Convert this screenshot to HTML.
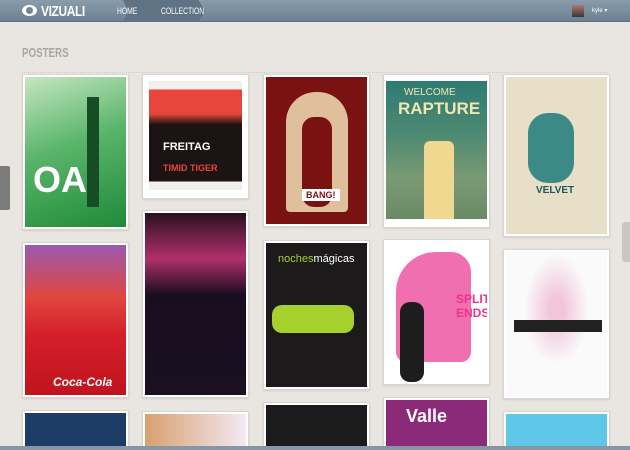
<!DOCTYPE html><html><head><style>
*{margin:0;padding:0;box-sizing:border-box}
html,body{width:630px;height:450px;overflow:hidden}
body{background:#e9e6e1;font-family:"Liberation Sans",sans-serif;position:relative}
.hd{position:absolute;left:0;top:0;width:630px;height:22px;background:linear-gradient(#8a9cab,#6c8192);border-bottom:1px solid #5d6f7d}
.logo{position:absolute;left:41px;top:3px;color:#fff;font-weight:bold;font-size:15px;letter-spacing:-0.5px;transform:scaleX(.8);transform-origin:left}
.eye{position:absolute;left:22px;top:5px;width:15px;height:11px;border-radius:50%;background:#fff}
.eye:after{content:"";position:absolute;left:4px;top:2px;width:7px;height:7px;border-radius:50%;background:#6f8596}
.nav{position:absolute;top:6px;color:#fff;font-size:9px;transform:scaleX(.75);transform-origin:left}
.col{position:absolute;left:123px;top:0;width:82px;height:22px;background:#5f7384;clip-path:polygon(0 0,92% 0,100% 50%,92% 100%,0 100%,6% 50%)}
.av{position:absolute;left:572px;top:5px;width:12px;height:12px;background:linear-gradient(#a77,#433)}
.usr{position:absolute;left:592px;top:7px;color:#fff;font-size:6px}
h1{position:absolute;left:22px;top:45px;font-size:13px;color:#a9a6a1;font-weight:bold;transform:scaleX(.75);transform-origin:left}
.rule{position:absolute;left:22px;top:72px;width:585px;border-top:1px dotted #cfcbc5}
.c{position:absolute;width:107px;background:#fff;border:1px solid #d8d4ce;box-shadow:0 1px 2px rgba(0,0,0,.1);padding:2px;overflow:hidden}
.c>div{width:100%;height:100%;position:relative;overflow:hidden}
.t{position:absolute;font-weight:bold;white-space:nowrap}
.fb{position:absolute;left:0;top:166px;width:10px;height:44px;background:#7b7b7b;border-radius:0 2px 2px 0}
.sc{position:absolute;left:622px;top:222px;width:8px;height:40px;background:#c9c6c1;border-radius:4px 0 0 4px}
.bot{position:absolute;left:0;top:446px;width:630px;height:4px;background:#8796a2}
</style></head><body>
<div class="hd">
<div class="eye"></div><div class="logo">VIZUALI</div>
<div class="col"></div>
<div class="nav" style="left:117px">HOME</div>
<div class="nav" style="left:161px">COLLECTION</div>
<div class="av"></div><div class="usr">kyle ▾</div>
</div>
<h1>POSTERS</h1><div class="rule"></div>
<div class="fb"></div><div class="sc"></div>

<div class="c" style="left:22px;top:74px;height:156px"><div style="background:linear-gradient(160deg,#c5e6c2,#5ab56a 45%,#1f8a3a)"><span class="t" style="left:8px;top:82px;font-size:36px;color:#fff">OA</span><span style="position:absolute;left:62px;top:20px;width:12px;height:110px;background:#174d22"></span></div></div>
<div class="c" style="left:22px;top:242px;height:156px"><div style="background:linear-gradient(#9a5ab0,#e0463d 35%,#d41f2a 60%,#c0141e)"><span class="t" style="left:28px;top:130px;font-size:12px;color:#fff;font-style:italic">Coca-Cola</span></div></div>
<div class="c" style="left:22px;top:410px;height:60px"><div style="background:#1d3d66"></div></div>

<div class="c" style="left:142px;top:74px;height:125px;padding:6px 6px 8px"><div style="background:linear-gradient(#f0f0ec 0 8%,#e8463a 8% 30%,#1c1414 40%,#1c1414 92%,#f0f0ec 92%)"><span class="t" style="left:14px;top:60px;font-size:11px;color:#fff">FREITAG</span><span class="t" style="left:14px;top:82px;font-size:9px;color:#e8463a">TIMID TIGER</span></div></div>
<div class="c" style="left:142px;top:210px;height:188px"><div style="background:linear-gradient(#2a1020,#b0306a 25%,#1a0d1f 45%,#1a1020)"></div></div>
<div class="c" style="left:142px;top:411px;height:60px"><div style="background:linear-gradient(90deg,#d8a070,#f3e9f4)"></div></div>

<div class="c" style="left:263px;top:74px;height:153px"><div style="background:#7a1212"><span style="position:absolute;left:20px;top:15px;width:62px;height:120px;background:#e0c09c;border-radius:30px 30px 4px 4px"></span><span style="position:absolute;left:36px;top:40px;width:30px;height:90px;background:#7a1212;border-radius:12px"></span><span class="t" style="left:36px;top:112px;font-size:9px;color:#7a1212;background:#fff;padding:1px 4px">BANG!</span></div></div>
<div class="c" style="left:263px;top:240px;height:150px"><div style="background:#1d1a1c"><span class="t" style="left:12px;top:10px;font-size:11px;color:#a6d02b;font-weight:normal">noches<span style="color:#fff">mágicas</span></span><span style="position:absolute;left:6px;top:62px;width:82px;height:28px;background:#a6d02b;border-radius:10px"></span></div></div>
<div class="c" style="left:263px;top:402px;height:60px"><div style="background:#1b1b1b"></div></div>

<div class="c" style="left:383px;top:74px;height:154px;padding:6px 2px 8px"><div style="background:linear-gradient(#2e7b73,#4e8a72 40%,#7b9a74 70%,#6a8a66)"><span class="t" style="left:18px;top:6px;font-size:10px;color:#f3e6b0;font-weight:normal">WELCOME</span><span class="t" style="left:12px;top:18px;font-size:17px;color:#f3e6b0">RAPTURE</span><span style="position:absolute;left:38px;top:60px;width:30px;height:80px;background:#f0d890;border-radius:6px 6px 0 0"></span></div></div>
<div class="c" style="left:383px;top:239px;height:146px"><div style="background:#fff"><span style="position:absolute;left:10px;top:10px;width:75px;height:110px;background:#f06fb0;border-radius:40px 20px 10px 10px"></span><span style="position:absolute;left:14px;top:60px;width:24px;height:80px;background:#1d1d1d;border-radius:10px"></span><span class="t" style="left:70px;top:50px;font-size:12px;color:#f0328a">SPLIT<br>ENDS</span></div></div>
<div class="c" style="left:383px;top:397px;height:60px"><div style="background:#8a2a78"><span class="t" style="left:20px;top:6px;font-size:18px;color:#fff">Valle</span></div></div>

<div class="c" style="left:503px;top:74px;height:163px"><div style="background:#e8dfc8"><span style="position:absolute;left:22px;top:36px;width:46px;height:70px;background:#3c8a86;border-radius:20px"></span><span class="t" style="left:30px;top:108px;font-size:10px;color:#1b5a5a">VELVET</span></div></div>
<div class="c" style="left:503px;top:249px;height:150px"><div style="background:radial-gradient(ellipse at 50% 40%,#f1c6dc 10%,#fafafa 45%)"><span style="position:absolute;left:8px;top:68px;width:88px;height:12px;background:#222"></span></div></div>
<div class="c" style="left:503px;top:411px;height:60px"><div style="background:#5ec6e6"></div></div>
<div class="bot"></div>
</body></html>
